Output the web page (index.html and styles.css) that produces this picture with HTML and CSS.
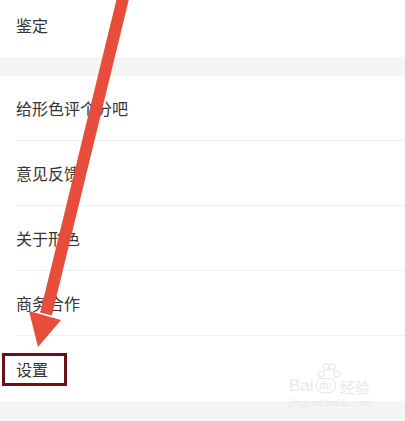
FILE: index.html
```html
<!DOCTYPE html>
<html>
	<head>
		<title>设置</title>
		<link rel="stylesheet" href="styles.css">
	</head>
	<body>
		<div id="page">
			<div class="group">
				<div class="row first">鉴定</div>
			</div>
			<div class="gap"></div>
			<div class="group">
				<div class="row">给形色评个分吧</div>
				<div class="row">意见反馈</div>
				<div class="row">关于形色</div>
				<div class="row">商务合作</div>
				<div class="row last">设置</div>
			</div>
			<div class="gap bottom"></div>

			<div id="mark"></div>
			<svg id="arrow" width="405" height="421" viewBox="0 0 405 421">
				<line x1="125" y1="-10" x2="46" y2="314" stroke="#e84c3a" stroke-width="12"/>
				<polygon points="29,311 61,320 38,347" fill="#e84c3a"/>
			</svg>

			<div id="watermark">
				<div class="wm-top">
					<span class="wm-bai">Bai</span>
					<span class="wm-du">du
						<svg class="paw" width="26" height="18" viewBox="0 0 26 18">
							<circle cx="5" cy="12" r="3" fill="none" stroke="#e8e8e8" stroke-width="1.2"/>
							<circle cx="10" cy="5" r="3.2" fill="none" stroke="#e8e8e8" stroke-width="1.2"/>
							<circle cx="16" cy="5" r="3.2" fill="none" stroke="#e8e8e8" stroke-width="1.2"/>
							<circle cx="21" cy="12" r="3" fill="none" stroke="#e8e8e8" stroke-width="1.2"/>
						</svg>
					</span>
					<span class="wm-jy">经验</span>
				</div>
				<div class="wm-url">jingyan.baidu.com</div>
			</div>
		</div>
	</body>
</html>
```

FILE: styles.css
```css
body{
	margin: 0;
	background: #f5f5f5;
	font-family: "Noto Sans CJK SC", "Noto Sans", sans-serif;
}
#page{
	position: relative;
	width: 405px;
	height: 421px;
	overflow: hidden;
}
.group{
	background: #fff;
}
.row{
	margin-left: 16px;
	height: 64px;
	border-bottom: 1px solid #efefef;
	display: flex;
	align-items: center;
	font-size: 16px;
	line-height: 1;
	color: #333;
}
.row.first{
	height: 50px;
	padding-bottom: 7px;
	border-bottom: none;
}
.row.last{
	border-bottom: none;
	height: 65px;
	padding-top: 1px;
	box-sizing: border-box;
}
.gap{
	height: 19px;
	background: #f5f5f5;
}
.gap.bottom{
	height: 20px;
}
#mark{
	position: absolute;
	left: 2px;
	top: 353px;
	width: 59px;
	height: 27px;
	border: 3px solid #6b1116;
}
#arrow{
	position: absolute;
	top: 0;
	left: 0;
}
#watermark{
	position: absolute;
	left: 289px;
	top: 368px;
	color: #e8e8e8;
}
.wm-top{
	display: flex;
	align-items: flex-end;
	gap: 2px;
	height: 26px;
}
.wm-bai{
	font-family: "Liberation Sans", sans-serif;
	font-size: 17px;
	line-height: 1;
}
.wm-du{
	position: relative;
	font-family: "Liberation Sans", sans-serif;
	font-size: 11px;
	line-height: 1;
	border: 1px solid #e8e8e8;
	border-radius: 6px;
	padding: 1px 3px;
	margin-bottom: 1px;
}
.paw{
	position: absolute;
	left: -1px;
	top: -17px;
}
.wm-jy{
	font-size: 15px;
	line-height: 1;
	margin-left: 2px;
}
.wm-url{
	font-family: "Liberation Serif", serif;
	font-style: italic;
	font-size: 11px;
	margin-top: 2px;
}
```
